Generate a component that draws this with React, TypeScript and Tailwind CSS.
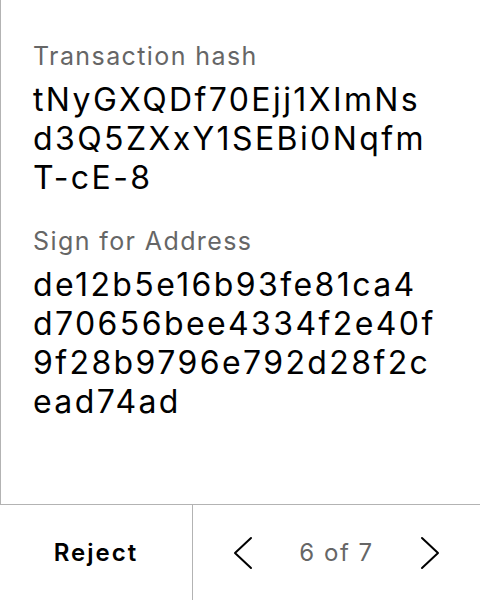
import { useState } from "react";

interface FieldProps {
	label: string;
	value: string;
}

function Field({ label, value }: FieldProps) {
	return (
		<div className="flex flex-col gap-[8px]">
			<div className="text-[25px] leading-8 tracking-[1.4px] text-[#666666]">{label}</div>
			<div className="w-[404px] text-[32px] leading-[39px] tracking-[2.4px] text-black break-all">{value}</div>
		</div>
	);
}

function Chevron({ dir }: { dir: "left" | "right" }) {
	return (
		<svg width="20" height="34" viewBox="0 0 20 34" fill="none" stroke="black" strokeWidth="2" strokeLinecap="round" strokeLinejoin="round">
			{dir === "left" ? <polyline points="18,2 2,17 18,32" /> : <polyline points="2,2 18,17 2,32" />}
		</svg>
	);
}

export default function App() {
	const [page, setPage] = useState(6);
	const total = 7;

	return (
		<div className="w-[480px] h-[600px] flex flex-col bg-white font-['Inter',sans-serif]">
			<div className="h-[504px] border-l border-[#b3b3b3] pl-8 pt-[40px] flex flex-col gap-[28px]">
				<Field label="Transaction hash" value="tNyGXQDf70Ejj1XImNsd3Q5ZXxY1SEBi0NqfmT-cE-8" />
				<Field label="Sign for Address" value="de12b5e16b93fe81ca4d70656bee4334f2e40f9f28b9796e792d28f2cead74ad" />
			</div>
			<div className="h-[96px] border-t border-[#b3b3b3] flex">
				<button className="w-[193px] border-r border-[#b3b3b3] text-[24px] font-semibold tracking-[2px] text-black">Reject</button>
				<div className="flex-1 flex items-center justify-center gap-[46px]">
					<button onClick={() => setPage((p) => Math.max(1, p - 1))}>
						<Chevron dir="left" />
					</button>
					<span className="text-[24px] tracking-[1.5px] text-[#666666]">
						{page} of {total}
					</span>
					<button onClick={() => setPage((p) => Math.min(total, p + 1))}>
						<Chevron dir="right" />
					</button>
				</div>
			</div>
		</div>
	);
}
